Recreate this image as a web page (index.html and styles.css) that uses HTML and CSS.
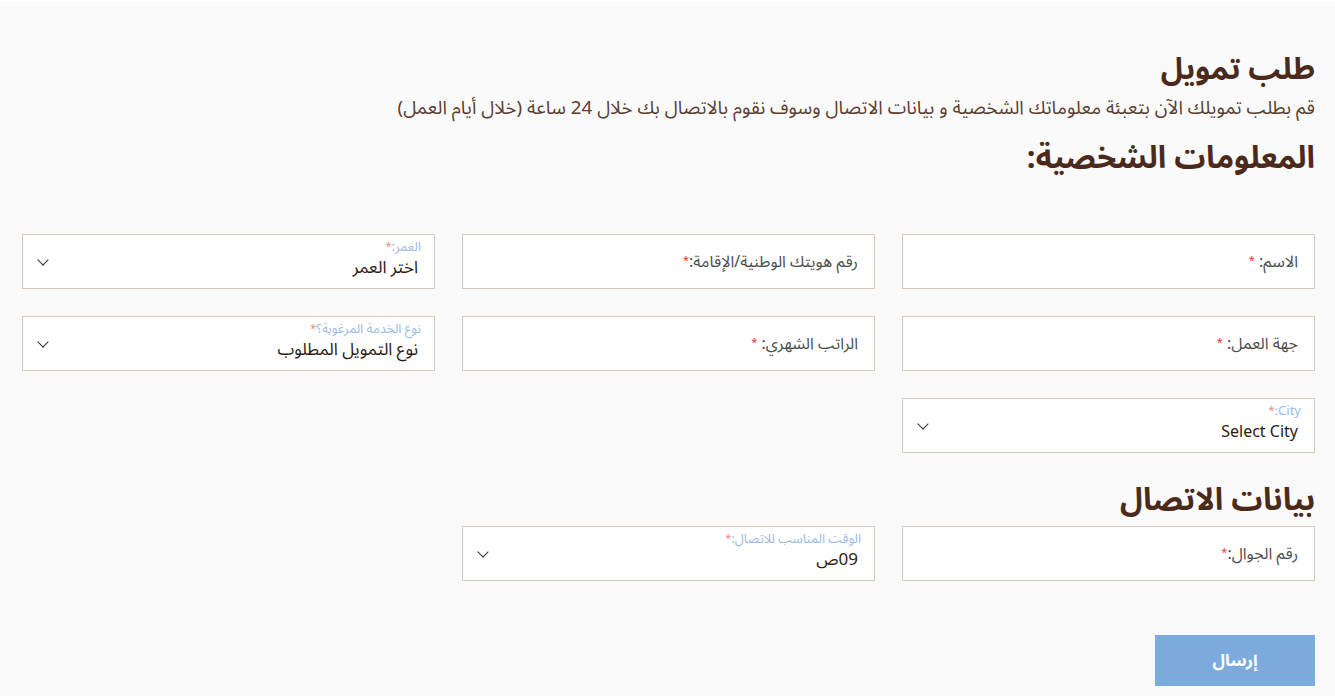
FILE: index.html
```html
<!DOCTYPE html>
<html lang="ar" dir="rtl">
<head>
  <meta charset="UTF-8" />
  <meta name="viewport" content="width=device-width, initial-scale=1.0"/>
  <title>طلب تمويل</title>
  <link rel="stylesheet" href="styles.css">
</head>
<body>

  <div class="page">
    <h1 class="page-title">طلب تمويل</h1>
    <p class="page-intro">قم بطلب تمويلك الآن بتعبئة معلوماتك الشخصية و بيانات الاتصال وسوف نقوم بالاتصال بك خلال 24 ساعة (خلال أيام العمل)</p>

    <h2 class="section-title personal">المعلومات الشخصية:</h2>

    <div class="form-grid">
      <label class="field">
        <span class="field-label">الاسم: <b>*</b></span>
      </label>
      <label class="field">
        <span class="field-label">رقم هويتك الوطنية/الإقامة:<b>*</b></span>
      </label>
      <label class="field select">
        <span class="float-label">العمر:<b>*</b></span>
        <span class="select-value">اختر العمر</span>
        <span class="chevron"></span>
      </label>

      <label class="field">
        <span class="field-label">جهة العمل: <b>*</b></span>
      </label>
      <label class="field">
        <span class="field-label">الراتب الشهري: <b>*</b></span>
      </label>
      <label class="field select">
        <span class="float-label">نوع الخدمة المرغوبة؟<b>*</b></span>
        <span class="select-value">نوع التمويل المطلوب</span>
        <span class="chevron"></span>
      </label>

      <label class="field select">
        <span class="float-label">City:<b>*</b></span>
        <span class="select-value latin">Select City</span>
        <span class="chevron"></span>
      </label>
    </div>

    <h2 class="section-title contact">بيانات الاتصال</h2>

    <div class="form-grid">
      <label class="field">
        <span class="field-label">رقم الجوال:<b>*</b></span>
      </label>
      <label class="field select">
        <span class="float-label">الوقت المناسب للاتصال:<b>*</b></span>
        <span class="select-value">09ص</span>
        <span class="chevron"></span>
      </label>
    </div>

    <div class="actions">
      <button class="submit-btn">إرسال</button>
    </div>
  </div>

</body>
</html>
```

FILE: styles.css
```css
body {
  margin: 0;
  background-color: #fafafa;
  font-family: "Noto Sans Arabic", "DejaVu Sans", "Noto Sans", sans-serif;
  color: #4b2a1c;
  border-top: 2px solid #fff;
}

.page {
  padding: 46px 20px 0 22px;
}

.page-title {
  margin: 0;
  font-size: 30px;
  font-weight: bold;
  line-height: 44px;
}

.page-intro {
  margin: 2px 0 0;
  font-size: 18.8px;
  line-height: 28px;
  color: #5a3e32;
}

.section-title {
  margin: 0;
  font-size: 31px;
  font-weight: bold;
  line-height: 44px;
}

.section-title.personal {
  margin-top: 14px;
  margin-bottom: 54px;
}

.section-title.contact {
  margin-top: 25px;
  margin-bottom: 4px;
}

.form-grid {
  display: grid;
  grid-template-columns: repeat(3, 413px);
  column-gap: 27px;
  row-gap: 27px;
}

.field {
  position: relative;
  display: flex;
  align-items: center;
  height: 55px;
  box-sizing: border-box;
  padding: 0 16px;
  background-color: #fff;
  border: 1px solid #d6cabc;
}

/* required marker */
.field b {
  color: #e53935;
  font-size: 11px;
  font-weight: normal;
  vertical-align: 3px;
}

.field-label {
  font-size: 16px;
  color: #4d4d4d;
}

.field.select {
  flex-direction: column;
  align-items: flex-start;
  justify-content: flex-start;
  gap: 2px;
  padding-top: 4px;
  padding-right: 13px;
}

.float-label {
  font-size: 13px;
  line-height: 15px;
  color: #9bbbe4;
}

.float-label b {
  color: #f08a80;
  vertical-align: 1px;
}

.select-value {
  font-size: 17px;
  line-height: 22px;
  color: #2e1a12;
  padding-right: 3px;
}

.select-value.latin {
  font-size: 16px;
}

.chevron {
  position: absolute;
  left: 16px;
  top: 50%;
  width: 7px;
  height: 7px;
  margin-top: -6px;
  border-right: 1.3px solid #333;
  border-bottom: 1.3px solid #333;
  transform: rotate(45deg);
}

.actions {
  display: flex;
  margin-top: 54px;
}

.submit-btn {
  width: 160px;
  height: 51px;
  border: none;
  background-color: #7aabdc;
  color: #fff;
  font-family: inherit;
  font-size: 17px;
  font-weight: bold;
  cursor: pointer;
}
```
